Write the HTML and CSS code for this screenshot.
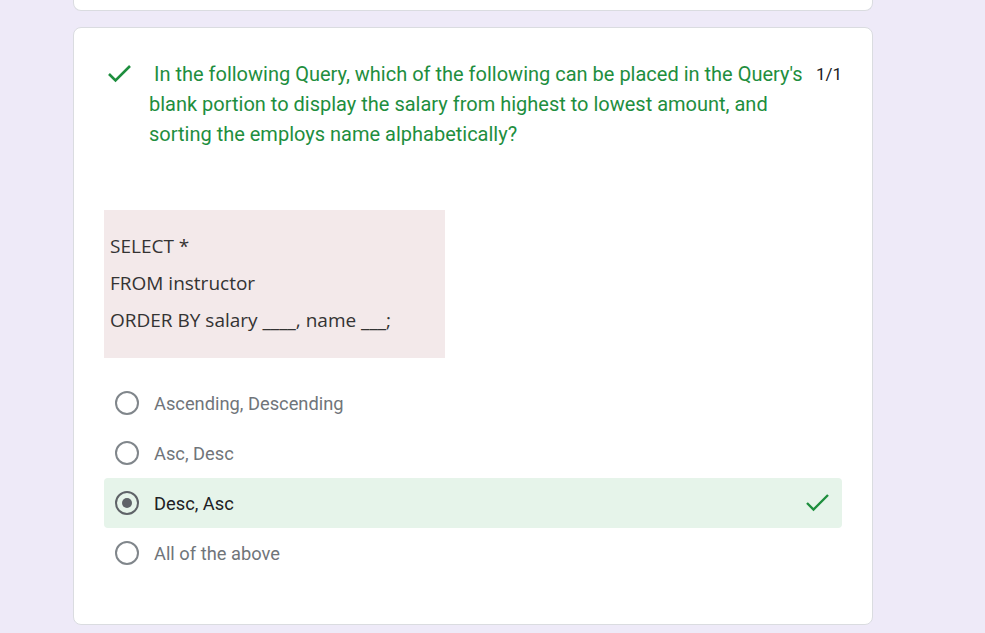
FILE: index.html
```html
<!DOCTYPE html>
<html>
<head>
<meta charset="utf-8">
<link rel="stylesheet" href="styles.css">
</head>
<body>
<div class="page">
  <div class="card card-prev"></div>
  <div class="card">
    <div class="q-header">
      <div class="q-icon">
        <svg width="26" height="20" viewBox="0 0 26 20"><polyline points="3,10 9.5,16.5 24,2" fill="none" stroke="#1e8e3e" stroke-width="2.6"/></svg>
      </div>
      <div class="q-title">&nbsp;In the following Query, which of the following can be placed in the Query's blank portion to display the salary from highest to lowest amount, and sorting the employs name alphabetically?</div>
      <div class="q-score">1/1</div>
    </div>
    <div class="q-image">
      <div class="code-line">SELECT *</div>
      <div class="code-line">FROM instructor</div>
      <div class="code-line">ORDER BY salary ____, name ___;</div>
    </div>
    <div class="options">
      <div class="option"><span class="radio"></span><span class="opt-text">Ascending, Descending</span></div>
      <div class="option"><span class="radio"></span><span class="opt-text">Asc, Desc</span></div>
      <div class="option selected"><span class="radio checked"></span><span class="opt-text">Desc, Asc</span>
        <svg class="opt-check" width="26" height="20" viewBox="0 0 26 20"><polyline points="3,10 9.5,16.5 24,2" fill="none" stroke="#1e8e3e" stroke-width="2.4"/></svg>
      </div>
      <div class="option"><span class="radio"></span><span class="opt-text">All of the above</span></div>
    </div>
  </div>
</div>
</body>
</html>
```
FILE: styles.css
```css
html, body {
  margin: 0;
  padding: 0;
  background: #eeeaf8;
}
body {
  font-family: Roboto, "Noto Sans", Arial, sans-serif;
}
.page {
  width: 800px;
  margin-left: 73px;
  display: flex;
  flex-direction: column;
  gap: 16px;
}
.card {
  background: #fff;
  border: 1px solid #dadce0;
  border-radius: 8px;
  padding: 31px 30px 46px 30px;
}
.card-prev {
  height: 11px;
  padding: 0;
  border-top: none;
  border-radius: 0 0 8px 8px;
  box-sizing: border-box;
}
.q-header {
  display: flex;
  align-items: flex-start;
}
.q-icon {
  width: 45px;
  flex: none;
  padding-top: 5px;
}
.q-icon svg {
  display: block;
  margin-left: 2px;
}
.q-title {
  width: 658px;
  flex: none;
  color: #1e8e3e;
  font-size: 20px;
  line-height: 30px;
}
.q-score {
  margin-left: 9px;
  font-size: 17px;
  line-height: 30px;
  color: #202124;
}
.q-image {
  margin-top: 61px;
  width: 341px;
  height: 148px;
  box-sizing: border-box;
  background: #f3e9ea;
  padding: 18px 0 0 6px;
  font-family: "Open Sans", "Noto Sans", sans-serif;
  font-size: 19px;
  color: #333;
}
.code-line {
  line-height: 37px;
}
.options {
  margin-top: 20px;
  display: flex;
  flex-direction: column;
}
.option {
  height: 50px;
  display: flex;
  align-items: center;
  border-radius: 4px;
}
.option.selected {
  background: #e6f4ea;
}
.radio {
  width: 20px;
  height: 20px;
  border: 2px solid #80868b;
  border-radius: 50%;
  margin-left: 11px;
  margin-right: 15px;
  box-sizing: content-box;
  flex: none;
  position: relative;
}
.radio.checked {
  border-color: #5f6368;
}
.radio.checked::after {
  content: "";
  position: absolute;
  left: 5px;
  top: 5px;
  width: 10px;
  height: 10px;
  border-radius: 50%;
  background: #5f6368;
}
.opt-text {
  font-size: 18.3px;
  color: #70757a;
}
.selected .opt-text {
  color: #202124;
}
.opt-check {
  margin-left: auto;
  margin-right: 12px;
}
```
